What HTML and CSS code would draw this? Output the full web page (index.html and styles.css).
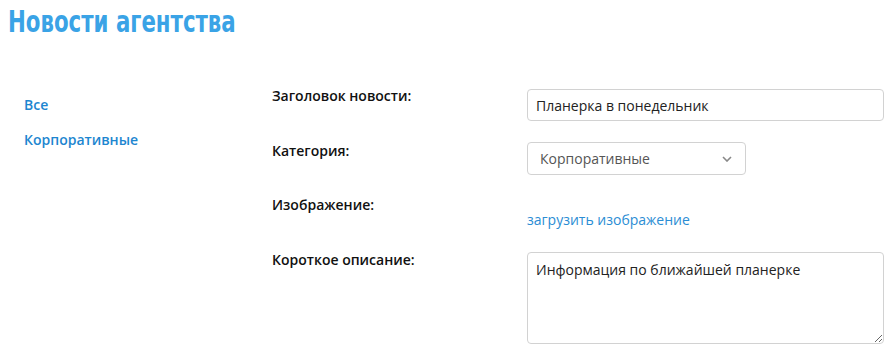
FILE: index.html
```html
<!DOCTYPE html>
<html lang="ru">
<head>
    <meta charset="UTF-8">
    <meta name="viewport" content="width=device-width, initial-scale=1.0">
    <title>Новости агентства</title>
    <link rel="stylesheet" href="styles.css">
</head>
<body>
    <h1 class="page-title"><span class="title-text">Новости агентства</span></h1>
    <div class="layout">
        <ul class="categories">
            <li><a href="#">Все</a></li>
            <li><a href="#">Корпоративные</a></li>
        </ul>
        <form class="news-form">
            <label class="form-label" for="title">Заголовок новости:</label>
            <div class="field field-title">
                <input type="text" id="title" class="text-input" value="Планерка в понедельник">
            </div>

            <label class="form-label" for="category">Категория:</label>
            <div class="field field-category">
                <div class="select-wrap">
                    <select id="category" class="select-input">
                        <option>Корпоративные</option>
                        <option>Все</option>
                    </select>
                    <svg class="chevron" width="10" height="6" viewBox="0 0 10 6">
                        <path d="M1 1 L5 5 L9 1" fill="none" stroke="#888" stroke-width="1.6"/>
                    </svg>
                </div>
            </div>

            <span class="form-label">Изображение:</span>
            <div class="field field-image">
                <a href="#" class="upload-link">загрузить изображение</a>
            </div>

            <label class="form-label" for="desc">Короткое описание:</label>
            <div class="field field-desc">
                <textarea id="desc" class="text-area">Информация по ближайшей планерке</textarea>
            </div>
        </form>
    </div>
</body>
</html>
```

FILE: styles.css
```css
body {
    margin: 0;
    padding: 0 8px;
    font-family: 'Open Sans', 'Liberation Sans', sans-serif;
    font-size: 14px;
    color: #222;
    background: #fff;
}
.page-title {
    margin: 0;
    padding-top: 2px;
    font-family: 'DejaVu Sans', sans-serif;
    font-weight: bold;
    font-size: 30px;
    line-height: 40px;
    color: #3aa3e6;
}
/* the original heading font is a condensed one, none is installed */
.title-text {
    display: inline-block;
    transform: scaleX(0.71);
    transform-origin: left center;
}
.layout {
    display: grid;
    grid-template-columns: 248px 1fr;
    margin-top: 44px;
    padding-left: 16px;
}
.categories {
    list-style: none;
    margin: 0;
    padding: 9px 0 0;
}
.categories li {
    line-height: 20px;
    margin-bottom: 15px;
}
.categories a {
    color: #1d86d0;
    font-weight: 600;
    text-decoration: none;
}
.news-form {
    display: grid;
    grid-template-columns: 255px 357px;
    row-gap: 20px;
    align-items: start;
}
.form-label {
    font-weight: 600;
    line-height: 20px;
    color: #111;
}
.field-title { margin-top: 3px; }
.field-category { margin-top: 1px; }
.field-image { margin-top: 15px; }
.field-desc { margin-top: 2px; }
.text-input,
.select-input,
.text-area {
    box-sizing: border-box;
    font-family: 'Open Sans', 'Liberation Sans', sans-serif;
    font-size: 14px;
    border: 1px solid #d2d2d2;
    border-radius: 4px;
    background: #fff;
    outline: none;
}
.text-input {
    width: 357px;
    height: 32px;
    padding: 0 8px;
    color: #222;
}
.select-wrap {
    position: relative;
    width: 219px;
}
.select-input {
    appearance: none;
    -webkit-appearance: none;
    width: 219px;
    height: 33px;
    padding: 0 12px;
    color: #555;
}
.chevron {
    position: absolute;
    right: 14px;
    top: 14px;
}
.upload-link {
    display: block;
    line-height: 20px;
    color: #2b8dd4;
    text-decoration: none;
}
.text-area {
    display: block;
    width: 357px;
    height: 92px;
    padding: 7px 8px;
    color: #222;
    resize: both;
}
```
